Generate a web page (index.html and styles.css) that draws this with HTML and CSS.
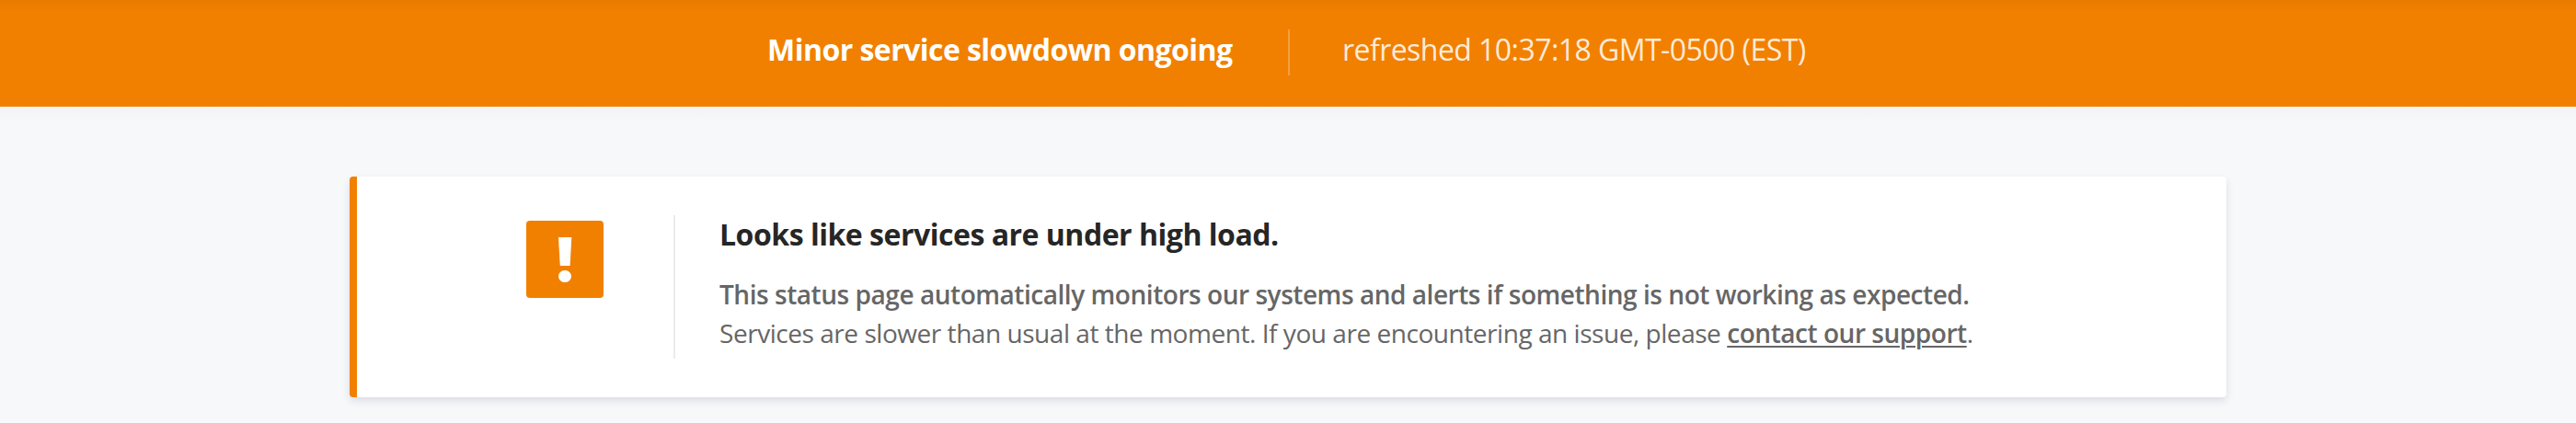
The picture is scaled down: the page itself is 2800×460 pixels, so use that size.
FILE: index.html
```html
<!DOCTYPE html>
<html lang="en">
<head>
<meta charset="utf-8">
<title>Service status</title>
<link rel="stylesheet" href="styles.css">
</head>
<body>
<header class="banner">
  <div class="banner-cell banner-status"><strong class="status-text">Minor service slowdown ongoing</strong></div>
  <div class="banner-divider"></div>
  <div class="banner-cell banner-refresh"><span class="refresh-text">refreshed 10:37:18 GMT-0500 (EST)</span></div>
</header>
<main class="page">
  <section class="card">
    <div class="card-icon">
      <svg class="icon" viewBox="0 0 84 84" width="84" height="84" aria-hidden="true">
        <rect width="84" height="84" rx="4" fill="#f28000"/>
        <path d="M35 18H49.3L47.6 49H36.8Z" fill="#fff"/>
        <rect x="35" y="54" width="14" height="13" rx="6.5" fill="#fff"/>
      </svg>
    </div>
    <div class="card-body">
      <h1 class="card-title">Looks like services are under high load.</h1>
      <p class="card-text"><span class="lead">This status page automatically monitors our systems and alerts if something is not working as expected.</span><br><span class="detail">Services are slower than usual at the moment. If you are encountering an issue, please <a class="link" href="#">contact our support</a>.</span></p>
    </div>
  </section>
</main>
</body>
</html>
```
FILE: styles.css
```css
* {
  box-sizing: border-box;
}

body {
  margin: 0;
  height: 460px;
  overflow: hidden;
  background: linear-gradient(#f2f3f5 116px, #f7f8fa 132px);
  font-family: "Open Sans", sans-serif;
}

.banner {
  display: grid;
  grid-template-columns: 1fr 2px 1fr;
  align-items: center;
  height: 116px;
  padding-left: 2px;
  background: linear-gradient(#e97b00, #f28000 14px);
  color: #fff;
  font-size: 32px;
  line-height: 48px;
  letter-spacing: -0.55px;
  white-space: nowrap;
}

.banner-cell {
  padding-bottom: 8px;
}

.banner-status {
  padding-right: 60.5px;
  text-align: right;
}

.banner-refresh {
  padding-left: 57px;
}

.banner-divider {
  height: 50px;
  margin-bottom: 2px;
  background: rgba(255, 255, 255, 0.25);
}

.status-text {
  font-weight: 700;
}

.refresh-text {
  font-weight: 400;
  color: rgba(255, 255, 255, 0.85);
}

.page {
  padding: 76px 380px 28px;
}

.card {
  display: flex;
  height: 240px;
  padding: 42px 0;
  background: #fff;
  border-left: 8px solid #f28000;
  border-radius: 4px;
  box-shadow: 0 4px 8px rgba(30, 30, 70, 0.12);
}

.card-icon {
  width: 346px;
  padding: 6px 76px 0 184px;
  border-right: 2px solid #ebebeb;
}

.icon {
  display: block;
}

.card-body {
  padding-left: 48px;
  white-space: nowrap;
}

.card-title {
  margin: 0 0 23px;
  font-size: 32px;
  line-height: 42px;
  font-weight: 700;
  letter-spacing: -0.48px;
  color: #262626;
}

.card-text {
  margin: 0;
  font-size: 28px;
  line-height: 42px;
  letter-spacing: -0.455px;
  color: #666;
}

.lead,
.link {
  font-weight: 600;
}

.link {
  color: inherit;
  text-decoration-thickness: 2px;
  text-underline-offset: 3px;
}
```
